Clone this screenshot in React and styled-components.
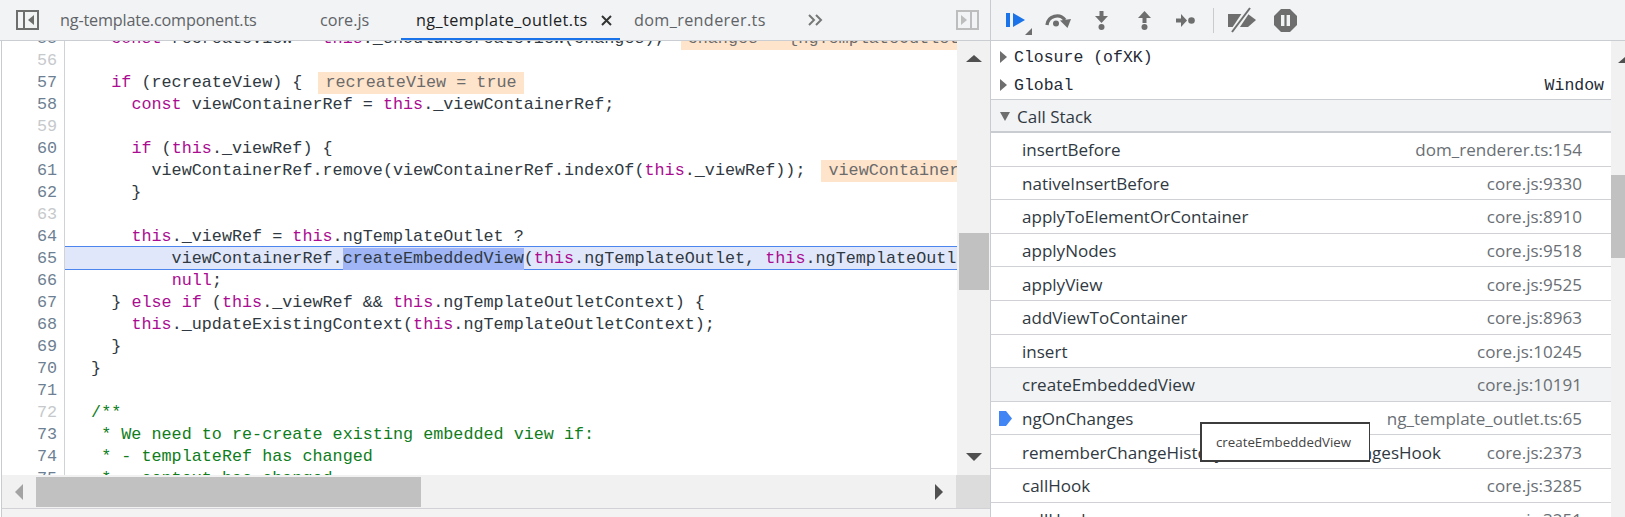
import React from 'react'
import styled, { createGlobalStyle } from 'styled-components'

const uiFont = `'Open Sans', 'Noto Sans', sans-serif`
const monoFont = `'Liberation Mono', 'DejaVu Sans Mono', monospace`
const iconGray = '#6e6e6e'

const GlobalStyle = createGlobalStyle`
  html, body {
    margin: 0;
    padding: 0;
    background: #fff;
    overflow: hidden;
  }
`

const Shell = styled.div`
  position: relative;
  display: flex;
  width: 1625px;
  height: 517px;
  overflow: hidden;
  font-family: ${uiFont};
  color: #303942;
`

const SourcesPane = styled.div`
  display: flex;
  flex-direction: column;
  width: 990px;
  flex: none;
  box-sizing: border-box;
  border-left: 1px solid #c8ccd0;
  margin-left: 1px;
  margin-right: -1px;
`

const TabBar = styled.div`
  display: flex;
  align-items: center;
  height: 41px;
  flex: none;
  box-sizing: border-box;
  background: #f1f3f4;
  border-bottom: 1px solid #cacdd1;
  margin-left: -2px;
  padding-left: 2px;
`

const SidebarToggle = styled.svg`
  flex: none;
  margin-left: ${p => p.$left}px;
`

const Tab = styled.div`
  display: flex;
  align-items: center;
  gap: 13px;
  box-sizing: border-box;
  height: 40px;
  flex: none;
  width: ${p => p.$width}px;
  padding-left: ${p => p.$pad}px;
  padding-top: 2px;
  font-size: 16.2px;
  letter-spacing: ${p => p.$spacing || 0}px;
  white-space: nowrap;
  color: ${p => (p.$active ? '#202124' : '#5f6368')};
  border-bottom: 2px solid ${p => (p.$active ? '#1a73e8' : 'transparent')};
`

const Editor = styled.div`
  display: flex;
  height: 434px;
  flex: none;
`

const CodeView = styled.div`
  width: 955px;
  flex: none;
  overflow: hidden;
`

const CodeLines = styled.div`
  margin-top: -13px;
  font-family: ${monoFont};
  font-size: 16.78px;
  white-space: pre;
`

const Line = styled.div`
  display: flex;
  height: 22px;
  line-height: 22px;
`

const LineNumber = styled.div`
  width: 63px;
  flex: none;
  box-sizing: border-box;
  padding-right: 7px;
  text-align: right;
  border-right: 1px solid #d0d2d6;
  color: ${p => (p.$faint ? '#c6c9cc' : '#6d7f92')};
`

const CodeCell = styled.div`
  flex: 1;
  min-width: 0;
  padding-left: 6px;
  overflow: hidden;
  color: #303942;
  ${p =>
    p.$current &&
    `
    background: #e1e7fb;
    box-shadow: 0 -1px 0 #e1e7fb, 0 -2px 0 #4c85ee, inset 0 -1px 0 #4c85ee;
    overflow: visible;
  `}
`

const Keyword = styled.span`
  color: #aa0d91;
`

const Comment = styled.span`
  color: #0f7d1c;
`

const Selected = styled.span`
  display: inline-block;
  height: 22px;
  background: #9fb5f5;
`

const InlineValue = styled.span`
  display: inline-block;
  margin-left: 16px;
  padding: 0 7px;
  height: 22px;
  background: #ffe4cc;
  color: #6b6b6b;
`

const VScroll = styled.div`
  display: flex;
  flex-direction: column;
  align-items: center;
  width: 34px;
  flex: none;
  background: #f1f1f1;
`

const Caret = styled.div`
  flex: none;
  width: 0;
  height: 0;
  border-style: solid;
  border-color: transparent;
  ${p =>
    p.$dir === 'up'
      ? `border-width: 0 8px 7px; border-bottom-color: ${p.$color};`
      : p.$dir === 'down'
      ? `border-width: 8px 8px 0; border-top-color: ${p.$color};`
      : p.$dir === 'left'
      ? `border-width: 8px 8px 8px 0; border-right-color: ${p.$color};`
      : `border-width: 8px 0 8px 8px; border-left-color: ${p.$color};`}
`

const SmallRightCaret = styled(Caret)`
  border-width: 6px 0 6px 7px;
`

const SmallDownCaret = styled(Caret)`
  border-width: 9px 5.5px 0;
`

const VThumb = styled.div`
  width: 30px;
  height: 57px;
  margin-top: 171px;
  margin-bottom: 163px;
  background: #c1c1c1;
`

const UpSlot = styled.div`
  margin-top: 14px;
`

const HScroll = styled.div`
  display: flex;
  align-items: center;
  height: 34px;
  flex: none;
  box-sizing: border-box;
  background: #f1f1f1;
  border-bottom: 1px solid #d0d2d6;
  padding-left: 13px;
`

const HThumb = styled.div`
  width: 385px;
  height: 30px;
  margin: 0 514px 0 13px;
  background: #c1c1c1;
`

const Corner = styled.div`
  margin-left: 13px;
  width: 34px;
  height: 33px;
  background: #dcdcdc;
`

const PaneFoot = styled.div`
  flex: 1;
  background: #f3f3f3;
`

const DebugPane = styled.div`
  flex: 1;
  min-width: 0;
  display: flex;
  flex-direction: column;
  box-sizing: border-box;
  border-left: 1px solid #c8ccd0;
`

const Toolbar = styled.div`
  display: flex;
  align-items: center;
  height: 41px;
  flex: none;
  box-sizing: border-box;
  background: #f1f3f4;
  border-bottom: 1px solid #cacdd1;
  padding-left: 15px;
`

const ToolIcon = styled.svg`
  flex: none;
  margin-left: ${p => p.$left || 0}px;
  margin-top: ${p => p.$top || 0}px;
`

const ToolDivider = styled.div`
  width: 1px;
  height: 25px;
  flex: none;
  margin-left: 18px;
  background: #c8ccd0;
`

const DebugBody = styled.div`
  flex: 1;
  min-height: 0;
  display: flex;
  overflow: hidden;
`

const DebugList = styled.div`
  flex: 1;
  min-width: 0;
`

const ScopeRows = styled.div`
  padding-top: 2px;
  border-bottom: 1px solid #cacdd1;
`

const ScopeRow = styled.div`
  display: flex;
  align-items: center;
  gap: 7px;
  height: 28px;
  padding: 0 7px 0 9px;
  font-family: ${monoFont};
  font-size: 16.5px;
  color: #1f2a36;
`

const ScopeValue = styled.span`
  margin-left: auto;
`

const SectionHeader = styled.div`
  display: flex;
  align-items: center;
  gap: 7px;
  box-sizing: border-box;
  height: 33px;
  padding: 1px 0 0 9px;
  background: #f1f3f4;
  border-bottom: 2px solid #c9ccd1;
  font-size: 17px;
  color: #303942;
`

const FrameRow = styled.div`
  position: relative;
  display: flex;
  align-items: center;
  justify-content: space-between;
  box-sizing: border-box;
  height: 33.6px;
  flex: none;
  padding: 1px 29px 0 31px;
  border-bottom: 1px solid #cfd1d5;
  font-size: 17.05px;
  white-space: nowrap;
  background: ${p => (p.$hovered ? '#f1f3f4' : '#fff')};
  color: #303942;
`

const FrameLocation = styled.span`
  color: #6a6f75;
`

const CurrentMarker = styled.svg`
  position: absolute;
  left: 8px;
  top: 9px;
`

const SideScroll = styled.div`
  display: flex;
  flex-direction: column;
  width: 14px;
  flex: none;
  background: #f1f1f1;
  overflow: hidden;
`

const SideArrow = styled.div`
  margin: 15px 0 0 7px;
`

const SideThumb = styled.div`
  height: 83px;
  margin-top: 112px;
  background: #c1c1c1;
`

const Tooltip = styled.div`
  position: absolute;
  left: 1200px;
  top: 422px;
  width: 170px;
  height: 40px;
  box-sizing: border-box;
  padding-left: 14px;
  display: flex;
  align-items: center;
  background: #fff;
  border: 2px solid #3c3c3c;
  border-right-width: 1px;
  font-size: 13.3px;
  color: #444;
`

const kw = t => <Keyword>{t}</Keyword>

const codeLines = [
  { n: 55, body: <>    {kw('const')} recreateView = {kw('this')}._shouldRecreateView(changes);<InlineValue>changes = {'{'}ngTemplateOutlet: SimpleChange{'}'}</InlineValue></> },
  { n: 56, faint: true, body: '' },
  { n: 57, body: <>    {kw('if')} (recreateView) {'{'}<InlineValue>recreateView = true</InlineValue></> },
  { n: 58, body: <>      {kw('const')} viewContainerRef = {kw('this')}._viewContainerRef;</> },
  { n: 59, faint: true, body: '' },
  { n: 60, body: <>      {kw('if')} ({kw('this')}._viewRef) {'{'}</> },
  { n: 61, body: <>        viewContainerRef.remove(viewContainerRef.indexOf({kw('this')}._viewRef));<InlineValue>viewContainerRef = ViewContainerRef_</InlineValue></> },
  { n: 62, body: '      }' },
  { n: 63, faint: true, body: '' },
  { n: 64, body: <>      {kw('this')}._viewRef = {kw('this')}.ngTemplateOutlet ?</> },
  { n: 65, current: true, body: <>          viewContainerRef.<Selected>createEmbeddedView</Selected>({kw('this')}.ngTemplateOutlet, {kw('this')}.ngTemplateOutl</> },
  { n: 66, body: <>          {kw('null')};</> },
  { n: 67, body: <>    {'}'} {kw('else if')} ({kw('this')}._viewRef && {kw('this')}.ngTemplateOutletContext) {'{'}</> },
  { n: 68, body: <>      {kw('this')}._updateExistingContext({kw('this')}.ngTemplateOutletContext);</> },
  { n: 69, body: '    }' },
  { n: 70, body: '  }' },
  { n: 71, body: '' },
  { n: 72, faint: true, body: <Comment>  /**</Comment> },
  { n: 73, body: <Comment>   * We need to re-create existing embedded view if:</Comment> },
  { n: 74, body: <Comment>   * - templateRef has changed</Comment> },
  { n: 75, body: <Comment>   * - context has changed</Comment> },
]

const frames = [
  ['insertBefore', 'dom_renderer.ts:154'],
  ['nativeInsertBefore', 'core.js:9330'],
  ['applyToElementOrContainer', 'core.js:8910'],
  ['applyNodes', 'core.js:9518'],
  ['applyView', 'core.js:9525'],
  ['addViewToContainer', 'core.js:8963'],
  ['insert', 'core.js:10245'],
  ['createEmbeddedView', 'core.js:10191'],
  ['ngOnChanges', 'ng_template_outlet.ts:65'],
  ['rememberChangeHistoryAndInvokeOnChangesHook', 'core.js:2373'],
  ['callHook', 'core.js:3285'],
  ['callHook', 'core.js:3251'],
]

const ToggleIcon = ({ color, flip, left }) => (
  <SidebarToggle $left={left} width="23" height="20" viewBox="0 0 23 20">
    <g transform={flip ? 'translate(23 0) scale(-1 1)' : undefined}>
      <rect x="1" y="1" width="21" height="18" fill="none" stroke={color} strokeWidth="2" />
      <rect x="7" y="1" width="2" height="18" fill={color} />
      <polygon points="18,5 18,15 12,10" fill={color} />
    </g>
  </SidebarToggle>
)

const App = () => (
  <Shell>
    <GlobalStyle />
    <SourcesPane>
      <TabBar>
        <ToggleIcon color="#6e6e6e" left={14} />
        <Tab $width={262} $pad={21} $spacing={-0.16}>ng-template.component.ts</Tab>
        <Tab $width={100} $pad={19}>core.js</Tab>
        <Tab $width={219} $pad={15} $spacing={0.43} $active>
          ng_template_outlet.ts
          <svg width="11" height="11" viewBox="0 0 11 11">
            <path d="M1 1 L10 10 M10 1 L1 10" stroke="#333" strokeWidth="2" />
          </svg>
        </Tab>
        <Tab $width={188} $pad={14} $spacing={0.36}>dom_renderer.ts</Tab>
        <svg width="16" height="12" viewBox="0 0 16 12">
          <path d="M1 1 L6 6 L1 11 M8 1 L13 6 L8 11" fill="none" stroke="#777" strokeWidth="2" />
        </svg>
        <ToggleIcon color="#bdbdbd" flip left={132} />
      </TabBar>
      <Editor>
        <CodeView>
          <CodeLines>
            {codeLines.map(l => (
              <Line key={l.n}>
                <LineNumber $faint={l.faint}>{l.n}</LineNumber>
                <CodeCell $current={l.current}>{l.body}</CodeCell>
              </Line>
            ))}
          </CodeLines>
        </CodeView>
        <VScroll>
          <UpSlot><Caret $dir="up" $color="#505050" /></UpSlot>
          <VThumb />
          <Caret $dir="down" $color="#505050" />
        </VScroll>
      </Editor>
      <HScroll>
        <Caret $dir="left" $color="#a3a3a3" />
        <HThumb />
        <Caret $dir="right" $color="#505050" />
        <Corner />
      </HScroll>
      <PaneFoot />
    </SourcesPane>
    <DebugPane>
      <Toolbar>
        <ToolIcon width="27" height="23" viewBox="0 0 27 23" $top={8}>
          <rect x="0" y="0" width="4" height="14" fill="#1a73e8" />
          <polygon points="7,0 19,7 7,14" fill="#1a73e8" />
          <polygon points="26,15 26,22 19,22" fill={iconGray} />
        </ToolIcon>
        <ToolIcon width="26" height="17" viewBox="0 0 26 17" $left={12}>
          <path d="M2 13 A10 10 0 0 1 20 8" fill="none" stroke={iconGray} strokeWidth="3.4" />
          <circle cx="11" cy="11.5" r="3" fill={iconGray} />
          <polygon points="15,8.5 26,7 22.5,16" fill={iconGray} />
        </ToolIcon>
        <ToolIcon width="13" height="19" viewBox="0 0 13 19" $left={24}>
          <rect x="4.5" y="0" width="4" height="6" fill={iconGray} />
          <polygon points="0,5 13,5 6.5,12" fill={iconGray} />
          <circle cx="6.5" cy="16" r="3" fill={iconGray} />
        </ToolIcon>
        <ToolIcon width="13" height="19" viewBox="0 0 13 19" $left={30}>
          <polygon points="0,7 13,7 6.5,0" fill={iconGray} />
          <rect x="4.5" y="7" width="4" height="5" fill={iconGray} />
          <circle cx="6.5" cy="16" r="3" fill={iconGray} />
        </ToolIcon>
        <ToolIcon width="19" height="13" viewBox="0 0 19 13" $left={25}>
          <rect x="0" y="4.5" width="6" height="4" fill={iconGray} />
          <polygon points="5,0 5,13 11,6.5" fill={iconGray} />
          <circle cx="15.5" cy="6.5" r="3.3" fill={iconGray} />
        </ToolIcon>
        <ToolDivider />
        <ToolIcon width="28" height="26" viewBox="0 0 28 26" $left={14}>
          <polygon points="0,7 20,7 28,13 20,20 0,20" fill={iconGray} />
          <path d="M21 1 L5 25" stroke="#f1f3f4" strokeWidth="6" />
          <path d="M22 1 L4 25" stroke={iconGray} strokeWidth="2" />
        </ToolIcon>
        <ToolIcon width="23" height="23" viewBox="0 0 23 23" $left={18}>
          <polygon points="7,0 16,0 23,7 23,16 16,23 7,23 0,16 0,7" fill={iconGray} />
          <rect x="7" y="6" width="3.4" height="11" fill="#f1f3f4" />
          <rect x="12.6" y="6" width="3.4" height="11" fill="#f1f3f4" />
        </ToolIcon>
      </Toolbar>
      <DebugBody>
        <DebugList>
          <ScopeRows>
            <ScopeRow><SmallRightCaret $dir="right" $color={iconGray} />Closure (ofXK)</ScopeRow>
            <ScopeRow><SmallRightCaret $dir="right" $color={iconGray} />Global<ScopeValue>Window</ScopeValue></ScopeRow>
          </ScopeRows>
          <SectionHeader>
            <SmallDownCaret $dir="down" $color={iconGray} />
            Call Stack
          </SectionHeader>
          {frames.map(([name, loc], i) => (
            <FrameRow key={i} $hovered={name === 'createEmbeddedView'}>
              {name === 'ngOnChanges' && (
                <CurrentMarker width="13" height="15" viewBox="0 0 13 15">
                  <polygon points="0,0 7,0 13,7.5 7,15 0,15" fill="#4285f4" />
                </CurrentMarker>
              )}
              <span>{name}</span>
              <FrameLocation>{loc}</FrameLocation>
            </FrameRow>
          ))}
        </DebugList>
        <SideScroll>
          <SideArrow><Caret $dir="up" $color="#505050" /></SideArrow>
          <SideThumb />
        </SideScroll>
      </DebugBody>
    </DebugPane>
    <Tooltip>createEmbeddedView</Tooltip>
  </Shell>
)

export default App
